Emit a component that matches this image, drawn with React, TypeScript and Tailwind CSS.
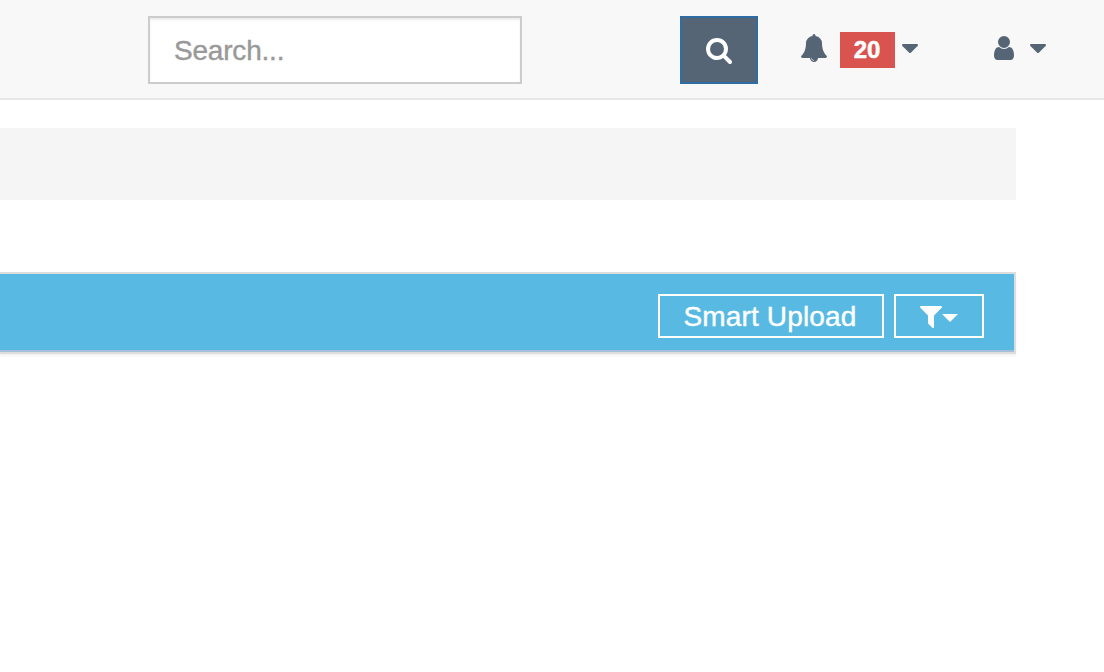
import React from "react";

const paths = {
  search:
    "M1216 832q0-185-131.5-316.5t-316.5-131.5-316.5 131.5-131.5 316.5 131.5 316.5 316.5 131.5 316.5-131.5 131.5-316.5zm512 832q0 52-38 90t-90 38q-54 0-90-38l-343-342q-179 124-399 124-143 0-273.5-55.5t-225-150-150-225-55.5-273.5 55.5-273.5 150-225 225-150 273.5-55.5 273.5 55.5 225 150 150 225 55.5 273.5q0 220-124 399l343 343q37 37 37 90z",
  bell: "M912 1696q0-16-16-16-59 0-101.5-42.5t-42.5-101.5q0-16-16-16t-16 16q0 73 51.5 124.5t124.5 51.5q16 0 16-16zm816-288q0 52-38 90t-90 38h-448q0 106-75 181t-181 75-181-75-75-181h-448q-52 0-90-38t-38-90q50-42 91-88t85-119.5 74.5-158.5 50-206 19.5-260q0-152 117-282.5t307-158.5q-8-19-8-39 0-40 28-68t68-28 68 28 28 68q0 20-8 39 190 28 307 158.5t117 282.5q0 139 19.5 260t50 206 74.5 158.5 85 119.5 91 88z",
  user: "M1536 1399q0 109-62.5 187t-150.5 78h-854q-88 0-150.5-78t-62.5-187q0-85 8.5-160.5t31.5-152 58.5-131 94-89 134.5-34.5q131 128 313 128t313-128q76 0 134.5 34.5t94 89 58.5 131 31.5 152 8.5 160.5zm-256-887q0 159-112.5 271.5t-271.5 112.5-271.5-112.5-112.5-271.5 112.5-271.5 271.5-112.5 271.5 112.5 112.5 271.5z",
  filter:
    "M1595 295q17 41-14 70l-493 493v742q0 42-39 59-13 5-25 5-27 0-45-19l-256-256q-19-19-19-45v-486l-493-493q-31-29-14-70 17-39 59-39h1280q42 0 59 39z",
};

type IconProps = { name: keyof typeof paths; viewBox: string; className: string };

function Icon({ name, viewBox, className }: IconProps) {
  return (
    <svg viewBox={viewBox} className={`shrink-0 fill-current ${className}`} aria-hidden="true">
      <path d={paths[name]} />
    </svg>
  );
}

function Caret({ className }: { className: string }) {
  return (
    <svg viewBox="0 0 16 10" className={`h-2.5 w-4 shrink-0 fill-current ${className}`} aria-hidden="true">
      <path d="M1 0H15Q16 0 16 1Q16 1.5 15.6 1.9L8.8 8.7Q8 9.4 7.2 8.7L0.4 1.9Q0 1.5 0 1Q0 0 1 0Z" />
    </svg>
  );
}

function TopBar() {
  return (
    <header className="flex h-[100px] items-start border-b-2 border-[#e7e7e7] bg-[#f8f8f8] pt-4 pl-[148px] text-[#556576]">
      <input
        type="text"
        placeholder="Search..."
        className="h-[68px] w-[374px] border-2 border-[#ccc] bg-white px-6 pt-0.5 text-[28px] tracking-[-0.2px] text-[#555] shadow-[inset_0_2px_2px_rgba(0,0,0,0.075)] outline-none [-webkit-text-stroke:0.4px] placeholder:text-[#999]"
      />
      <button
        aria-label="Search"
        className="ml-[158px] flex h-[68px] w-[78px] items-start justify-center border-2 border-[#2e6da4] bg-[#556576] pt-[18px] text-white"
      >
        <Icon name="search" viewBox="0 0 1792 1792" className="h-7 w-7" />
      </button>
      <div className="ml-[42px] flex pt-4">
        <Icon name="bell" viewBox="0 0 1792 1792" className="mt-0.5 h-7 w-7" />
        <span className="ml-3 flex h-9 w-[55px] items-center justify-center bg-[#d9534f] pr-px text-2xl leading-9 font-bold text-white [-webkit-text-stroke:0.5px]">
          20
        </span>
        <Caret className="mt-3 ml-[7px]" />
      </div>
      <div className="ml-[76px] flex gap-4 pt-[18px]">
        <Icon name="user" viewBox="256 0 1280 1792" className="h-7 w-5" />
        <Caret className="mt-2.5" />
      </div>
    </header>
  );
}

export default function App() {
  return (
    <div className="min-h-screen overflow-hidden bg-white font-['Liberation_Sans',Arial,sans-serif]">
      <TopBar />
      <main className="mr-[88px] pt-7">
        <div className="h-[72px] bg-[#f5f5f5]" />
        <section className="mt-[72px] border-y-2 border-r-2 border-[#ddd] shadow-[0_2px_2px_rgba(0,0,0,0.05)]">
          <div className="flex h-[78px] justify-end gap-2.5 border-b-2 border-[#a4bfdb] bg-[#58bae2] pt-5 pr-[30px] text-white">
            <button className="flex h-11 w-[226px] items-center justify-center border-2 border-white pt-0.5 pr-0.5 text-[28px] leading-9 tracking-[0.15px] [-webkit-text-stroke:0.4px]">
              Smart Upload
            </button>
            <button aria-label="Filter" className="flex h-11 w-[90px] items-start border-2 border-white pt-1.5 pl-6">
              <Icon name="filter" viewBox="192 0 1408 1792" className="h-7 w-[22px]" />
              <svg viewBox="0 0 16 8" className="mt-3 h-2 w-4 fill-current" aria-hidden="true">
                <path d="M0 0H16L8 8Z" />
              </svg>
            </button>
          </div>
        </section>
      </main>
    </div>
  );
}
